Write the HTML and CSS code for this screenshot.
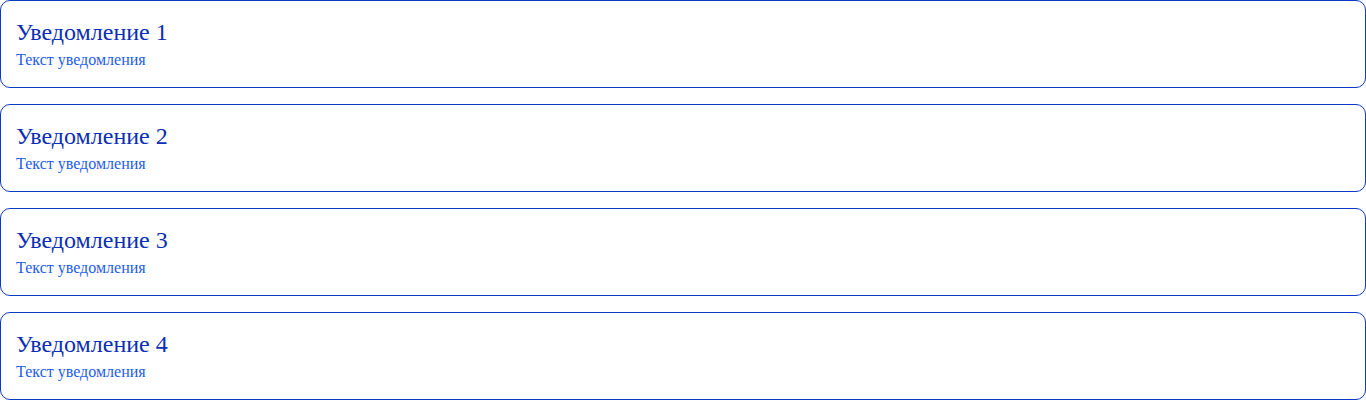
FILE: index.html
```html
<!DOCTYPE html>
<html lang="ru">
<head>
<meta charset="utf-8">
<link rel="stylesheet" href="styles.css">
</head>
<body>
<div class="list">
  <div class="card"><div class="title">Уведомление 1</div><div class="text">Текст уведомления</div></div>
  <div class="card"><div class="title">Уведомление 2</div><div class="text">Текст уведомления</div></div>
  <div class="card"><div class="title">Уведомление 3</div><div class="text">Текст уведомления</div></div>
  <div class="card"><div class="title">Уведомление 4</div><div class="text">Текст уведомления</div></div>
</div>
</body>
</html>
```
FILE: styles.css
```css
html, body { margin: 0; padding: 0; background: #fff; }
body { font-family: "Liberation Serif", "Times New Roman", serif; }
.list { display: flex; flex-direction: column; gap: 16px; }
.card {
  height: 88px;
  box-sizing: border-box;
  border: 1px solid #0b3bc4;
  border-radius: 10px;
  padding: 17px 15px;
  display: flex;
  flex-direction: column;
  gap: 5px;
}
.title { font-size: 24px; line-height: 28px; color: #0a2fb4; }
.text { font-size: 16px; line-height: 18px; color: #1d5cf0; }
```
